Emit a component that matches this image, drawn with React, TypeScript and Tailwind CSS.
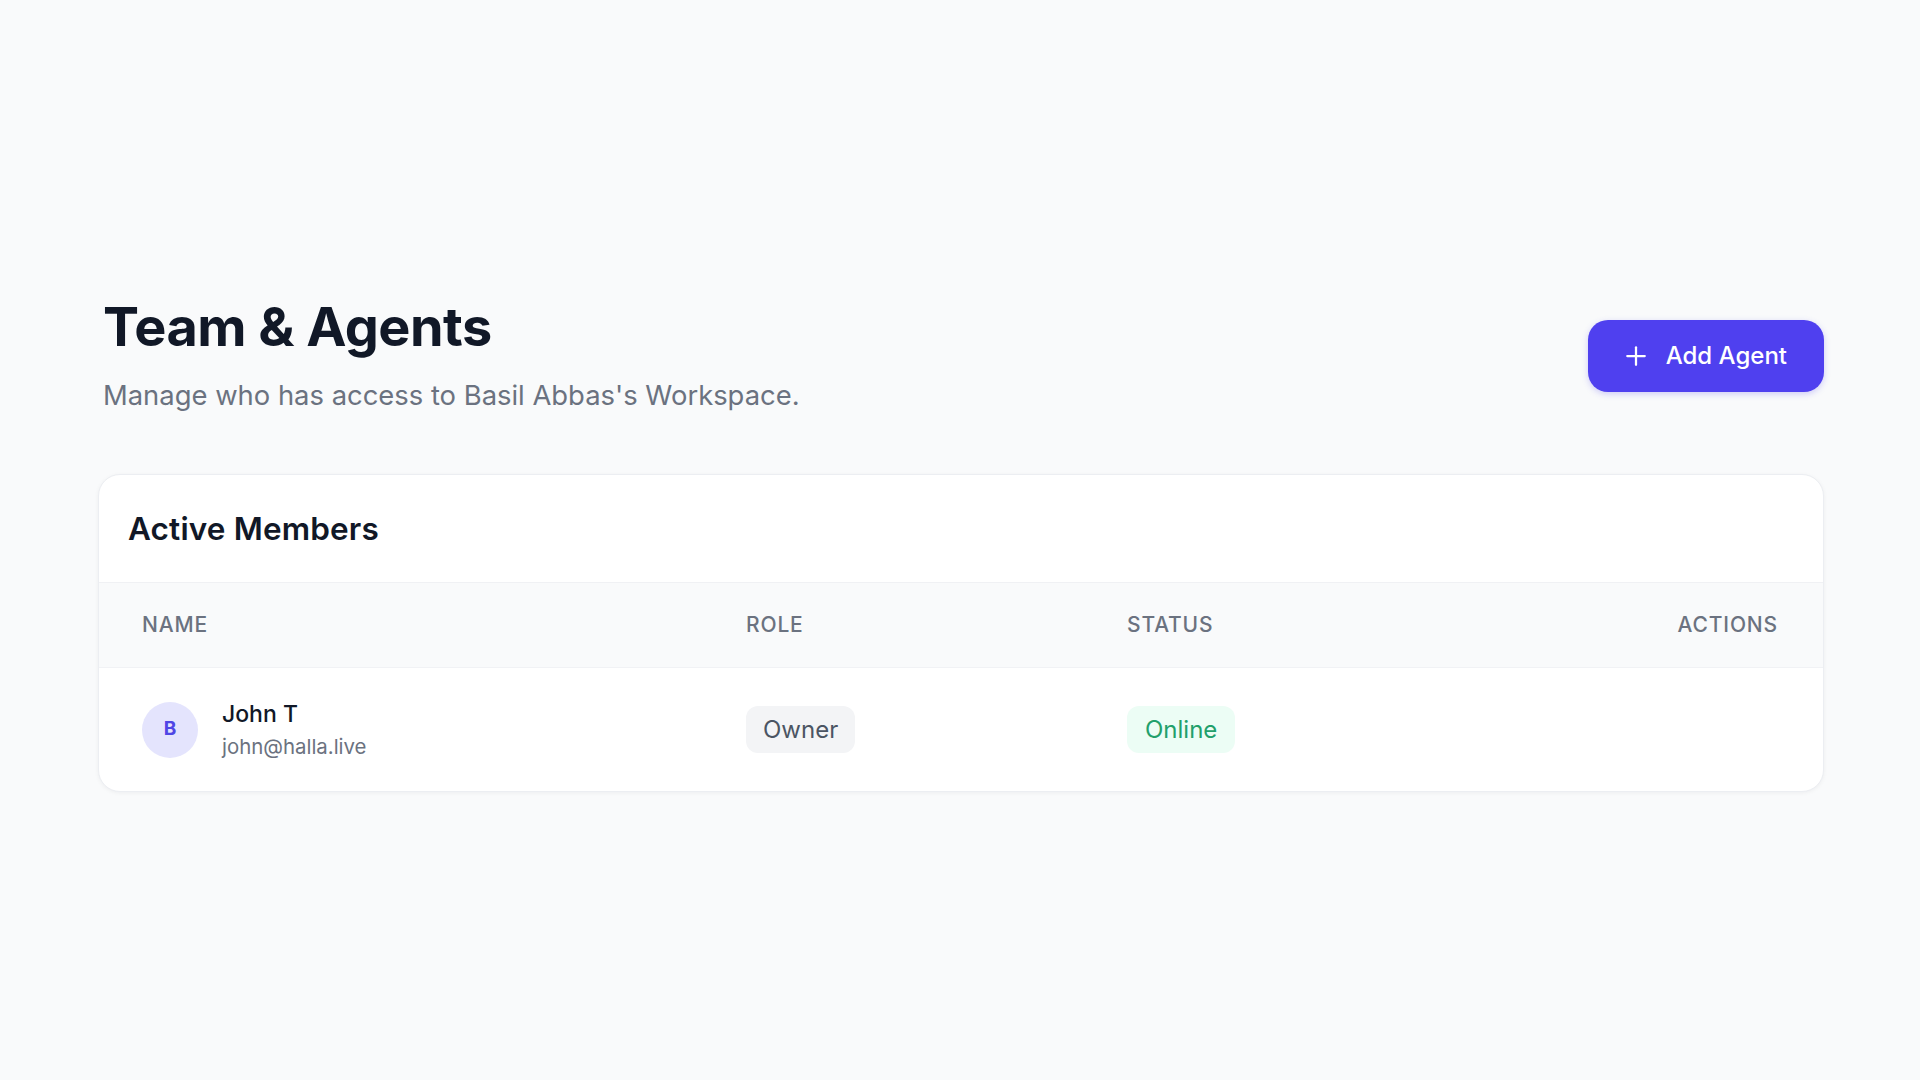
import { Plus } from 'lucide-react';

const members = [
  { initial: 'B', name: 'John T', email: 'john@halla.live', role: 'Owner', status: 'Online' },
];

const columns = 'grid grid-cols-[604px_381px_1fr_auto] items-center pl-[43px] pr-[45px]';

export default function App() {
  return (
    <div className="min-h-screen bg-[#f9fafb] font-['Inter','Noto_Sans',sans-serif] text-[#111827] antialiased">
      <div className="pl-[98px] pr-[96px] pt-[297px]">
        <div className="flex items-center justify-between">
          <div className="ml-[5px]">
            <h1 className="text-[54px] font-bold leading-[60px] tracking-[-0.01em] text-[#111827]">
              Team &amp; Agents
            </h1>
            <p className="mt-[17px] text-[27.4px] leading-[42px] text-[#6b7280]">
              Manage who has access to Basil Abbas&apos;s Workspace.
            </p>
          </div>

          <button className="mb-[2px] flex h-[72px] items-center gap-[15px] rounded-[20px] bg-[#4f40ef] pl-[33px] pr-[37px] text-[24px] font-medium text-white shadow-[0_2px_6px_rgba(79,66,238,0.25)]">
            <Plus className="size-[30px]" strokeWidth={1.8} />
            <span>Add Agent</span>
          </button>
        </div>

        <div className="mt-[58px] overflow-hidden rounded-[22px] border border-[#eceef2] bg-white shadow-[0_1px_4px_rgba(15,23,42,0.05)]">
          <div className="flex h-[108px] items-center border-b border-[#f0f1f4] px-[29px]">
            <h2 className="text-[31.5px] font-semibold tracking-[0.005em] text-[#111827]">Active Members</h2>
          </div>

          <div
            className={`${columns} h-[85px] border-b border-[#f1f2f5] bg-[#f9fafb] text-[21px] font-medium uppercase tracking-[0.04em] text-[#6b7280]`}
          >
            <span>Name</span>
            <span>Role</span>
            <span>Status</span>
            <span className="text-right">Actions</span>
          </div>

          {members.map((member) => (
            <div className={`${columns} h-[123px]`} key={member.email}>
              <div className="flex items-center gap-[24px]">
                <span className="flex size-[56px] items-center justify-center rounded-full bg-[#e4e4fd] text-[19px] font-bold text-[#4f46e5]">
                  {member.initial}
                </span>
                <div>
                  <div className="text-[23px] font-medium leading-[30px] text-[#111827]">{member.name}</div>
                  <div className="mt-[4px] text-[20.4px] leading-[28px] text-[#6b7280]">{member.email}</div>
                </div>
              </div>
              <div>
                <span className="inline-flex h-[47px] items-center rounded-[12px] bg-[#f3f4f6] px-[17px] text-[24px] text-[#4b5563]">
                  {member.role}
                </span>
              </div>
              <div>
                <span className="inline-flex h-[47px] items-center rounded-[12px] bg-[#ecfdf5] px-[18px] text-[24px] text-[#22a06b]">
                  {member.status}
                </span>
              </div>
              <div />
            </div>
          ))}
        </div>
      </div>
    </div>
  );
}
